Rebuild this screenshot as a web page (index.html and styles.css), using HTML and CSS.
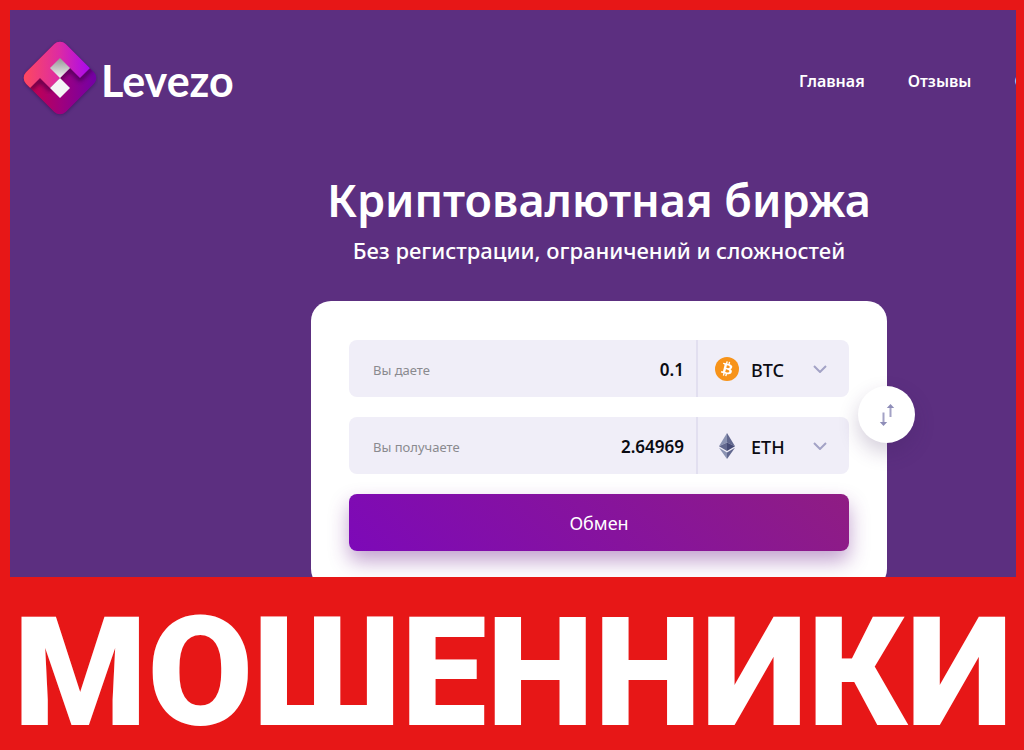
FILE: index.html
```html
<!DOCTYPE html>
<html lang="ru">
<head>
<meta charset="utf-8">
<title>Levezo</title>
<link rel="stylesheet" href="styles.css">
</head>
<body>
<div class="hero">
  <div class="site">
    <header class="header">
      <a class="logo" href="#">
        <svg class="logo-mark" viewBox="0 0 76 80" aria-hidden="true">
          <defs>
            <linearGradient id="top" x1="0" y1="0" x2="1" y2="0"><stop offset="0" stop-color="#ff4a5c"/><stop offset=".5" stop-color="#dc2aa5"/><stop offset=".9" stop-color="#a808f0"/></linearGradient>
            <linearGradient id="bottom" x1="0" y1="0" x2="1" y2="0"><stop offset="0.1" stop-color="#c4004c"/><stop offset=".5" stop-color="#a0007c"/><stop offset="1" stop-color="#7000a8"/></linearGradient>
            <linearGradient id="silver" x1="0" y1="0" x2="0" y2="1"><stop offset="0" stop-color="#959595"/><stop offset="1" stop-color="#f2f2f2"/></linearGradient>
            <clipPath id="tile"><rect x="10" y="11" width="56" height="56" rx="8" transform="rotate(45 38 39)"/></clipPath>
            <filter id="soft" x="-20%" y="-20%" width="140%" height="140%"><feGaussianBlur stdDeviation="2"/></filter>
          </defs>
          <rect x="11" y="13" width="54" height="54" rx="8" transform="rotate(45 38 40)" fill="#241040" opacity=".7" filter="url(#soft)"/>
          <g clip-path="url(#tile)">
            <path d="M0 0H76V80H0Z" fill="url(#bottom)"/>
            <path d="M8 50L18 41L28 50L38 39L48 30L58 40L70 29" fill="none" stroke="#35003f" stroke-width="4" opacity=".7" filter="url(#soft)"/>
            <path d="M0 0H76V21L58 39L48 29L38 39L28 49L18 39L6 51H0Z" fill="url(#top)"/>
          </g>
          <path d="M38 19L48 29L38 39L28 29Z" fill="url(#silver)"/>
          <path d="M38 39L48 49L38 59L28 49Z" fill="#f5f5f5"/>
        </svg>
        <span class="logo-name">Levezo</span>
      </a>
      <nav class="nav">
        <a href="#">Главная</a>
        <a href="#">Отзывы</a>
        <a href="#">О нас</a>
      </nav>
    </header>
    <main class="main">
      <h1 class="title">Криптовалютная биржа</h1>
      <p class="subtitle">Без регистрации, ограничений и сложностей</p>
      <form class="card">
        <div class="row">
          <label class="label" for="give">Вы даете</label>
          <input class="amount" id="give" type="text" value="0.1">
          <div class="currency">
            <svg class="coin" viewBox="0 0 24 24" aria-hidden="true"><circle cx="12" cy="12" r="12" fill="#f7931a"/><path fill="#fff" d="M17.3 10.3c.24-1.6-.98-2.45-2.64-3.03l.54-2.16-1.32-.33-.52 2.1-1.05-.25.53-2.12-1.32-.33-.54 2.16-2.67-.67-.35 1.41s.98.22.96.24c.53.13.63.48.61.76l-1.48 5.92c-.07.16-.23.41-.61.31.01.02-.96-.24-.96-.24l-.66 1.52 2.51.63-.54 2.18 1.31.33.54-2.16 1.05.27-.54 2.14 1.32.33.54-2.18c2.25.43 3.94.26 4.65-1.78.57-1.64-.03-2.58-1.21-3.2.86-.2 1.51-.76 1.68-1.93zm-3.01 4.22c-.41 1.64-3.17.75-4.06.53l.72-2.9c.9.23 3.77.67 3.34 2.37zm.41-4.25c-.37 1.5-2.67.74-3.41.55l.66-2.62c.74.18 3.14.53 2.75 2.07z"/></svg>
            <select class="select" aria-label="Отдаваемая валюта"><option>BTC</option><option>ETH</option></select>
            <svg class="chevron" viewBox="0 0 14 8" aria-hidden="true"><path d="M1 1L7 7L13 1" fill="none" stroke="#a3a2c6" stroke-width="2"/></svg>
          </div>
        </div>
        <div class="row">
          <label class="label" for="get">Вы получаете</label>
          <input class="amount" id="get" type="text" value="2.64969">
          <div class="currency">
            <svg class="coin" viewBox="0 0 24 26" aria-hidden="true"><path fill="#8a92b2" d="M12 0L4 13.2L12 9.6Z"/><path fill="#62688f" d="M12 0V9.6L20 13.2Z"/><path fill="#62688f" d="M4 13.2L12 9.6V17.9Z"/><path fill="#454a75" d="M12 9.6L20 13.2L12 17.9Z"/><path fill="#8a92b2" d="M4 14.8L12 19.4V26Z"/><path fill="#62688f" d="M20 14.8L12 19.4V26Z"/></svg>
            <select class="select" aria-label="Получаемая валюта"><option>ETH</option><option>BTC</option></select>
            <svg class="chevron" viewBox="0 0 14 8" aria-hidden="true"><path d="M1 1L7 7L13 1" fill="none" stroke="#a3a2c6" stroke-width="2"/></svg>
          </div>
        </div>
        <button class="submit" type="submit">Обмен</button>
        <button class="swap" type="button" aria-label="Поменять валюты местами">
          <svg class="swap-icon" viewBox="0 0 16 22" aria-hidden="true"><g fill="none" stroke="#a3a2c6" stroke-width="2"><path d="M4.500 8.500V20M11.500 2V13"/></g><path fill="#8e8db8" d="M.8 18H8.200L4.500 22ZM7.800 4H15.200L11.500 0Z"/></svg>
        </button>
      </form>
    </main>
  </div>
</div>
<footer class="warning">МОШЕННИКИ</footer>
</body>
</html>
```
FILE: styles.css
```css
* { box-sizing: border-box; }

body {
  margin: 0;
  padding: 10px 8px 0 10px;
  height: 100vh;
  display: flex;
  flex-direction: column;
  background: #e71717;
  color: #fff;
  font-family: "Noto Sans", "Open Sans", sans-serif;
}

.hero {
  flex: 1;
  min-height: 0;
  overflow: hidden;
  background: #5c2f80;
}

.site { min-width: 1178px; }

.header {
  display: flex;
  align-items: center;
  justify-content: space-between;
  padding: 29px 0 0 12px;
}

.logo {
  display: flex;
  align-items: center;
  gap: 3px;
  color: #fff;
  text-decoration: none;
}

.logo-mark { width: 76px; height: 80px; }

.logo-name {
  font: 700 43px/48px Lato, sans-serif;
  padding-top: 4px;
}

.nav {
  flex: 0 0 389px;
  display: flex;
  gap: 43px;
  padding-top: 4px;
}

.nav a {
  color: #fff;
  font-size: 16px;
  font-weight: 600;
  line-height: 24px;
  text-decoration: none;
}

.main {
  display: flex;
  flex-direction: column;
  align-items: center;
  padding-top: 48px;
}

.title {
  margin: 0;
  font-size: 45px;
  font-weight: 600;
  line-height: 66px;
}

.subtitle {
  margin: 0 0 34px;
  font-size: 22px;
  font-weight: 500;
  line-height: 34px;
}

.card {
  position: relative;
  width: 576px;
  padding: 39px 38px 38px;
  display: flex;
  flex-direction: column;
  gap: 20px;
  border-radius: 20px;
  background: #fff;
  color: #0b0b12;
}

.row {
  display: flex;
  align-items: center;
  height: 57px;
  padding-left: 24px;
  border-radius: 8px;
  background: #f0eef8;
}

.label {
  color: #8a8a8f;
  font-size: 13px;
  padding-top: 3px;
}

.amount {
  flex: 1;
  min-width: 0;
  padding: 2px 12px 0 0;
  border: 0;
  background: none;
  color: inherit;
  font: 600 17px/24px "Noto Sans", sans-serif;
  text-align: right;
}

.currency {
  display: flex;
  align-items: center;
  width: 153px;
  height: 100%;
  padding: 0 22px 0 17px;
  border-left: 2px solid #e2dff0;
}

.coin { width: 24px; height: 26px; }

.select {
  flex: 1;
  min-width: 0;
  margin-left: 12px;
  padding: 2px 0 0;
  appearance: none;
  border: 0;
  background: none;
  color: inherit;
  font: 500 18px/24px "Noto Sans", sans-serif;
}

.chevron { width: 14px; height: 8px; }

.submit {
  height: 57px;
  border: 0;
  border-radius: 8px;
  background: linear-gradient(45deg, #7d09b8, #8f1d83);
  box-shadow: 0 10px 20px rgba(110, 30, 140, .42);
  color: #fff;
  font: 400 18px/24px "Noto Sans", sans-serif;
}

.swap {
  position: absolute;
  top: 85px;
  right: -28px;
  width: 57px;
  height: 57px;
  padding: 0;
  display: grid;
  place-items: center;
  border: 0;
  border-radius: 50%;
  background: #fff;
  box-shadow: 0 9px 20px rgba(60, 30, 90, .22);
}

.swap-icon { width: 16px; height: 22px; }

.warning {
  padding-top: 19px;
  text-align: center;
  white-space: nowrap;
  font: 900 153px/154px Roboto, sans-serif;
}
```
